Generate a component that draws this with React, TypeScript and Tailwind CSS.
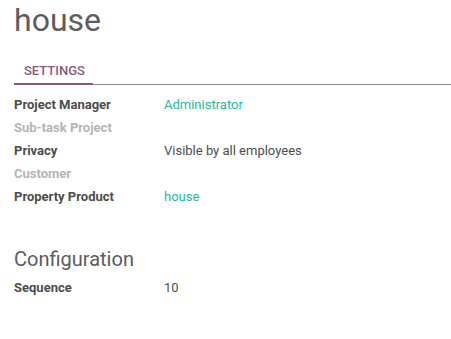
const rows: { label: string; value?: string; muted?: boolean; link?: boolean }[] = [
  { label: 'Project Manager', value: 'Administrator', link: true },
  { label: 'Sub-task Project', muted: true },
  { label: 'Privacy', value: 'Visible by all employees' },
  { label: 'Customer', muted: true },
  { label: 'Property Product', value: 'house', link: true },
];

function Field({ label, value, muted, link }: { label: string; value?: string; muted?: boolean; link?: boolean }) {
  return (
    <div className="flex h-[23px] items-center text-[13px]">
      <div className={`w-[150px] font-bold ${muted ? 'text-[#b4b4b4]' : 'text-[#4c4c4c]'}`}>{label}</div>
      {value && <div className={link ? 'text-[#1fb89e]' : 'text-[#4c4c4c]'}>{value}</div>}
    </div>
  );
}

export default function App() {
  return (
    <div className="h-[339px] w-[451px] overflow-hidden bg-white font-['Roboto',sans-serif] text-[#4c4c4c]">
      <h1 className="mt-px pl-[14px] text-[32px] leading-[38px] text-[#5c5c5c]">house</h1>

      <div className="ml-[14px] mt-[23px] flex border-b border-[#8c8c8c]">
        <div className="-mb-px w-[79px] border-b-2 border-[#875a7b] pb-[3px] pl-[10px] text-[13px] font-medium leading-[18px] text-[#875a7b]">
          SETTINGS
        </div>
      </div>

      <div className="mt-[8px] pl-[14px]">
        {rows.map((r) => (
          <Field key={r.label} {...r} />
        ))}
      </div>

      <h2 className="mt-[39px] pl-[14px] text-[20px] leading-[25px] text-[#5c5c5c]">Configuration</h2>
      <div className="mt-[4px] pl-[14px]">
        <Field label="Sequence" value="10" />
      </div>
    </div>
  );
}
